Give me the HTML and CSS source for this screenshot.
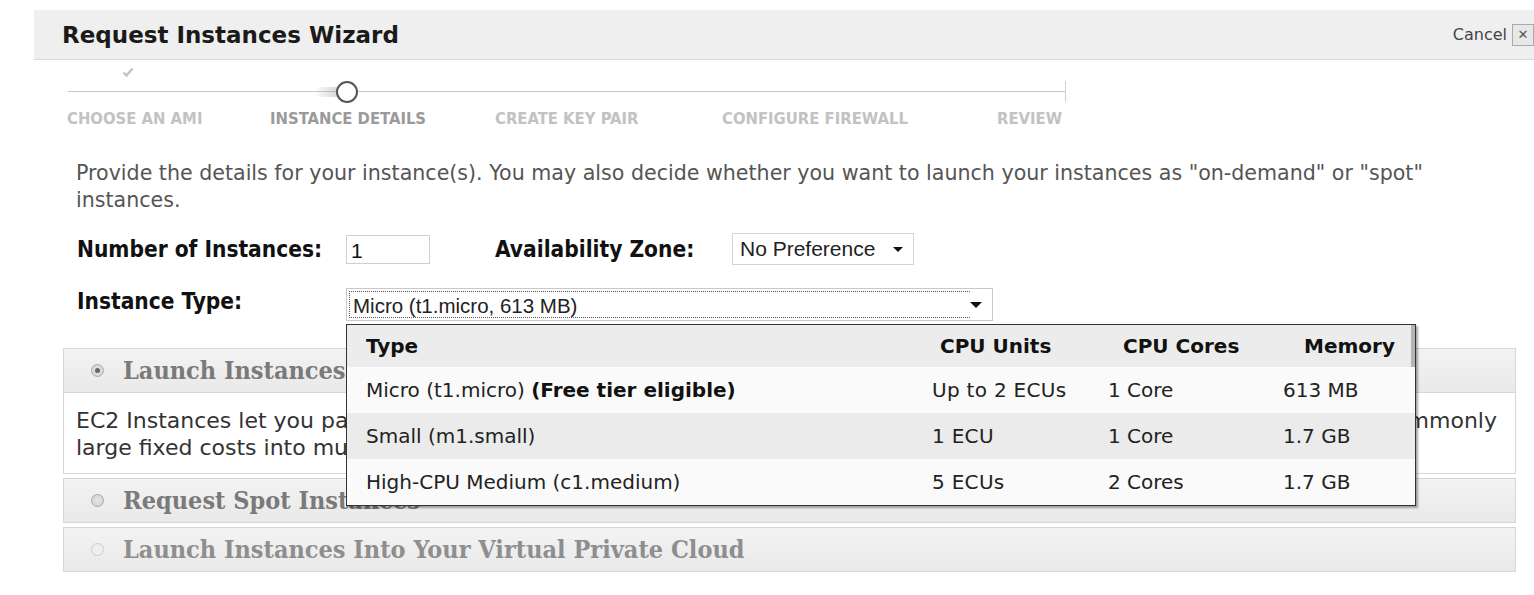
FILE: index.html
```html
<!DOCTYPE html>
<html>
<head>
<meta charset="utf-8">
<title>Request Instances Wizard</title>
<link rel="stylesheet" href="styles.css">
</head>
<body>
<div class="wizard">
  <div class="titlebar">
    <h1 class="title">Request Instances Wizard</h1>
    <div class="cancel"><span class="cancel-text">Cancel</span><span class="close-box">✕</span></div>
  </div>

  <div class="content">
    <div class="stepper">
      <div class="track"></div>
      <div class="step step-1">
        <div class="marker"><svg class="check" width="12" height="10" viewBox="0 0 12 10"><path d="M1.5 5.5 L4.5 8.5 L10.5 1.5" fill="none" stroke="#c4c4c4" stroke-width="2.4"/></svg></div>
        <div class="step-label">CHOOSE AN AMI</div>
      </div>
      <div class="step step-2">
        <div class="marker"><span class="glow"></span><span class="circle"></span></div>
        <div class="step-label current">INSTANCE DETAILS</div>
      </div>
      <div class="step step-3">
        <div class="marker"></div>
        <div class="step-label">CREATE KEY PAIR</div>
      </div>
      <div class="step step-4">
        <div class="marker"></div>
        <div class="step-label">CONFIGURE FIREWALL</div>
      </div>
      <div class="step step-5">
        <div class="marker"></div>
        <div class="step-label">REVIEW</div>
      </div>
    </div>

    <p class="desc">Provide the details for your instance(s). You may also decide whether you want to launch your instances as "on-demand" or "spot" instances.</p>

    <div class="form-row row-1">
      <label class="field-label label-num">Number of Instances:</label>
      <div class="text-input">1</div>
      <label class="field-label label-zone">Availability Zone:</label>
      <div class="select zone-select"><span>No Preference</span><span class="arrow"></span></div>
    </div>

    <div class="form-row row-2">
      <label class="field-label label-num">Instance Type:</label>
      <div class="type-wrap">
        <div class="select type-select"><span class="focus-text">Micro (t1.micro, 613 MB)</span><span class="arrow"></span></div>
        <div class="dropdown">
          <div class="dd-row dd-head">
            <div class="c1">Type</div>
            <div class="c2">CPU Units</div>
            <div class="c3">CPU Cores</div>
            <div class="c4">Memory</div>
          </div>
          <div class="dd-row light">
            <div class="c1">Micro (t1.micro) <b>(Free tier eligible)</b></div>
            <div class="c2">Up to 2 ECUs</div>
            <div class="c3">1 Core</div>
            <div class="c4">613 MB</div>
          </div>
          <div class="dd-row grey">
            <div class="c1">Small (m1.small)</div>
            <div class="c2">1 ECU</div>
            <div class="c3">1 Core</div>
            <div class="c4">1.7 GB</div>
          </div>
          <div class="dd-row light">
            <div class="c1">High-CPU Medium (c1.medium)</div>
            <div class="c2">5 ECUs</div>
            <div class="c3">2 Cores</div>
            <div class="c4">1.7 GB</div>
          </div>
        </div>
      </div>
    </div>

    <div class="panel open">
      <div class="panel-head"><span class="radio checked"></span><span class="panel-title">Launch Instances</span></div>
      <div class="panel-body">
        <div class="first-line"><span class="fl-start">EC2 Instances let you pay for compute capacity by the hour with no long term commitments.</span><span class="fl-end">This transforms what are commonly</span></div>
        <div>large fixed costs into much smaller variable costs.</div>
      </div>
    </div>
    <div class="panel">
      <div class="panel-head"><span class="radio"></span><span class="panel-title">Request Spot Instances</span></div>
    </div>
    <div class="panel disabled">
      <div class="panel-head"><span class="radio"></span><span class="panel-title">Launch Instances Into Your Virtual Private Cloud</span></div>
    </div>
  </div>
</div>
</body>
</html>
```

FILE: styles.css
```css
html, body {
  margin: 0;
  padding: 0;
  background: #ffffff;
  overflow: hidden;
}

body {
  font-family: "DejaVu Sans", Verdana, sans-serif;
  color: #333;
}

.wizard {
  padding: 10px 0 0 34px;
}

.titlebar {
  height: 49px;
  background: #efefef;
  border-bottom: 1px solid #d9d9d9;
  display: flex;
  align-items: center;
  justify-content: space-between;
  padding-left: 28px;
}

.title {
  margin: 0;
  font-size: 23px;
  font-weight: bold;
  color: #1a1a1a;
}

.cancel {
  display: flex;
  align-items: center;
  gap: 5px;
}

.cancel-text {
  font-size: 16px;
  color: #444;
}

.close-box {
  width: 20px;
  height: 20px;
  border: 1px solid #aaa;
  background: #e8e8e8;
  color: #555;
  font-size: 13px;
  font-weight: bold;
  display: flex;
  align-items: center;
  justify-content: center;
}

.content {
  margin-left: 29px;
  width: 1453px;
}

/* stepper */
.stepper {
  position: relative;
  display: flex;
  margin-left: 4px;
  width: 1000px;
  height: 70px;
}

.track {
  position: absolute;
  left: 1px;
  top: 31px;
  width: 998px;
  height: 1px;
  background: #c8c8c8;
}

.track::after {
  content: "";
  position: absolute;
  right: 0;
  top: -10px;
  width: 1px;
  height: 21px;
  background: #d0d0d0;
}

.step {
  display: flex;
  flex-direction: column;
}

.step-1 { width: 203px; }
.step-2 { width: 225px; }
.step-3 { width: 227px; }
.step-4 { width: 275px; }
.step-5 { width: 69px; }

.marker {
  height: 49px;
  position: relative;
}

.check {
  position: absolute;
  left: 55px;
  top: 7px;
}

.circle {
  position: absolute;
  left: 66px;
  top: 21px;
  width: 22px;
  height: 22px;
  box-sizing: border-box;
  border: 2px solid #555;
  border-radius: 50%;
  background: #fff;
}

.glow {
  position: absolute;
  left: 44px;
  top: 27px;
  width: 30px;
  height: 10px;
  background: linear-gradient(to right, rgba(150,150,150,0), rgba(150,150,150,0.5));
  border-radius: 6px;
}

.step-label {
  font-family: "DejaVu Sans Condensed", "DejaVu Sans", sans-serif;
  font-weight: bold;
  font-size: 16.5px;
  color: #c2c2c2;
  white-space: nowrap;
}

.step-label.current {
  color: #9a9a9a;
}

/* description */
.desc {
  margin: 30px 0 0 0;
  padding-left: 13px;
  font-size: 20.6px;
  line-height: 27px;
  color: #555;
}

/* form rows */
.form-row {
  display: flex;
  align-items: center;
}

.row-1 {
  margin-top: 19px;
  height: 32px;
}

.row-2 {
  margin-top: 23px;
  height: 33px;
  align-items: flex-start;
}

.field-label {
  font-family: "DejaVu Sans Condensed", "DejaVu Sans", sans-serif;
  font-weight: bold;
  font-size: 22.5px;
  color: #111;
}

.label-num {
  width: 269px;
  padding-left: 14px;
  white-space: nowrap;
}

.row-2 .label-num {
  line-height: 26px;
}

.text-input {
  width: 78px;
  height: 27px;
  border: 1px solid #cfcfcf;
  padding-left: 4px;
  font-family: "Liberation Sans", Arial, sans-serif;
  font-size: 21px;
  line-height: 29px;
  color: #111;
}

.label-zone {
  margin-left: 65px;
  width: 237px;
  white-space: nowrap;
}

.select {
  display: flex;
  align-items: center;
  justify-content: space-between;
  font-family: "Liberation Sans", Arial, sans-serif;
  color: #222;
  box-sizing: border-box;
}

.zone-select {
  width: 182px;
  height: 32px;
  border: 1px solid #d4d4d4;
  padding: 0 10px 0 7px;
  font-size: 21px;
}

.arrow {
  width: 0;
  height: 0;
  border-left: 5px solid transparent;
  border-right: 5px solid transparent;
  border-top: 5px solid #111;
}

.type-wrap {
  position: relative;
}

.type-select {
  width: 647px;
  height: 33px;
  border: 1px solid #c8c8c8;
  padding: 2px 10px 2px 2px;
  font-size: 20.5px;
}

.focus-text {
  flex: 1;
  height: 27px;
  line-height: 27px;
  border: 1px dotted #555;
  border-right: none;
  padding-left: 3px;
  box-sizing: border-box;
  white-space: nowrap;
}

.type-select .arrow {
  border-left-width: 6px;
  border-right-width: 6px;
  border-top-width: 6px;
}

/* dropdown */
.dropdown {
  position: absolute;
  left: 0;
  top: 36px;
  width: 1070px;
  border: 1px solid #333;
  background: #fff;
  box-shadow: 2px 2px 2px rgba(0,0,0,0.35);
  z-index: 5;
  box-sizing: border-box;
}

.dd-row {
  display: grid;
  grid-template-columns: 574px 176px 175px 1fr;
  height: 46px;
  align-items: center;
  font-size: 20px;
  color: #222;
}

.dd-head {
  height: 42px;
  background: #ececec;
  font-weight: bold;
  color: #111;
  border-right: 4px solid #b4b4b4;
}

.dd-row.light { background: #fafafa; }
.dd-row.grey { background: #ebebeb; }

.c1, .c2, .c3, .c4 { white-space: nowrap; }
.c1 { padding-left: 19px; }
.c1 b { color: #111; }
.c2 { padding-left: 11px; letter-spacing: 0.3px; }
.c3 { padding-left: 11px; }
.c4 { padding-left: 11px; }

.dd-head .c2 { padding-left: 19px; letter-spacing: 0; }
.dd-head .c3 { padding-left: 26px; }
.dd-head .c4 { padding-left: 32px; }

/* panels */
.panel {
  border: 1px solid #d6d6d6;
  margin-top: 4px;
}

.panel.open {
  margin-top: 27px;
}

.panel-head {
  height: 43px;
  display: flex;
  align-items: center;
  padding-left: 27px;
  background: linear-gradient(#f3f3f3, #e9e9e9);
}

.open .panel-head {
  border-bottom: 1px solid #d6d6d6;
}

.radio {
  width: 11px;
  height: 11px;
  border-radius: 50%;
  border: 1px solid #aaa;
  background: radial-gradient(circle, #e6e6e6 0, #cfcfcf 100%);
  margin-right: 19px;
  position: relative;
}

.radio.checked::after {
  content: "";
  position: absolute;
  left: 3px;
  top: 3px;
  width: 5px;
  height: 5px;
  border-radius: 50%;
  background: #666;
}

.disabled .radio {
  border-color: #ccc;
  background: #eee;
}

.panel-title {
  font-family: "DejaVu Serif Condensed", "DejaVu Serif", serif;
  font-weight: bold;
  font-size: 25px;
  color: #7a7a7a;
}

.disabled .panel-title {
  color: #8e8e8e;
}

.panel-body {
  height: 80px;
  box-sizing: border-box;
  padding: 14px 18px 0 12px;
  font-size: 22px;
  line-height: 27px;
  color: #333;
  background: #fff;
}

.first-line {
  display: flex;
  white-space: nowrap;
}

.fl-start {
  flex: 1 1 auto;
  min-width: 0;
  overflow: hidden;
}

.fl-end {
  flex: none;
  padding-left: 6px;
}
```
